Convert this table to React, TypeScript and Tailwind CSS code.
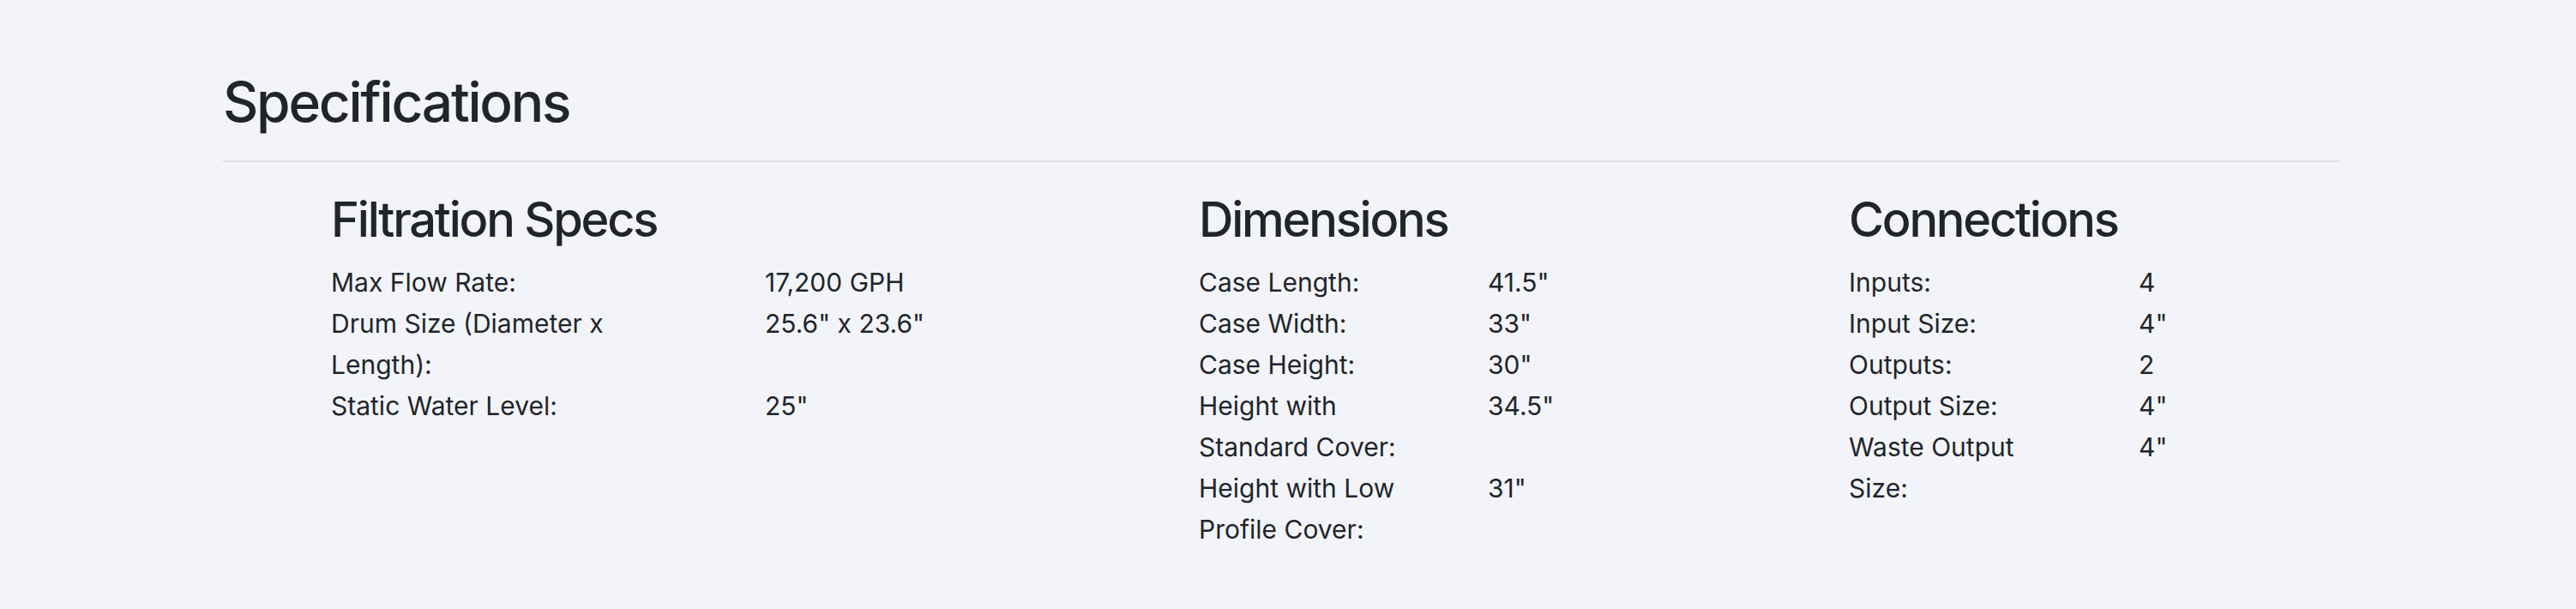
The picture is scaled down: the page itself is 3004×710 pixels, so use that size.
const specs = [
  {
    title: "Filtration Specs",
    width: "w-[1012px]",
    cols: "grid-cols-[506px_1fr]",
    labelPad: "pr-[86px]",
    rows: [
      ["Max Flow Rate:", "17,200 GPH"],
      ["Drum Size (Diameter x Length):", "25.6\" x 23.6\""],
      ["Static Water Level:", "25\""],
    ],
  },
  {
    title: "Dimensions",
    width: "w-[758px]",
    cols: "grid-cols-[337px_1fr]",
    labelPad: "pr-[72px]",
    rows: [
      ["Case Length:", "41.5\""],
      ["Case Width:", "33\""],
      ["Case Height:", "30\""],
      ["Height with Standard Cover:", "34.5\""],
      ["Height with Low Profile Cover:", "31\""],
    ],
  },
  {
    title: "Connections",
    width: "w-[573px]",
    cols: "grid-cols-[338px_1fr]",
    labelPad: "pr-[72px]",
    rows: [
      ["Inputs:", "4"],
      ["Input Size:", "4\""],
      ["Outputs:", "2"],
      ["Output Size:", "4\""],
      ["Waste Output Size:", "4\""],
    ],
  },
];

export default function App() {
  return (
    <div className="min-h-screen bg-[#f3f4f9] text-[#212529] font-['Inter',sans-serif]">
      <div className="ml-[260px] w-[2469px] pt-[81px]">
        <h2 className="text-[64px] leading-[1.2] font-medium tracking-[-0.035em] pb-[29px] border-b-2 border-[#dfe0e5]">
          Specifications
        </h2>

        <div className="flex pt-[34px] pl-[126px]">
          {specs.map((s) => (
            <div key={s.title} className={s.width}>
              <h3 className="text-[56px] leading-[1.2] font-medium tracking-[-0.04em] mb-[15px]">{s.title}</h3>
              <div className={`grid ${s.cols} text-[30px] leading-[48px]`}>
                {s.rows.map(([label, value]) => (
                  <div key={label} className="contents">
                    <div className={s.labelPad}>{label}</div>
                    <div>{value}</div>
                  </div>
                ))}
              </div>
            </div>
          ))}
        </div>
      </div>
    </div>
  );
}
